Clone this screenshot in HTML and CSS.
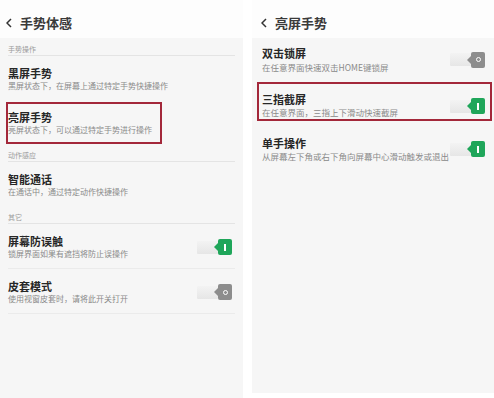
FILE: index.html
```html
<!DOCTYPE html>
<html lang="zh-CN">
<head>
<meta charset="utf-8">
<title>手势体感</title>
<link rel="stylesheet" href="styles.css">
</head>
<body>
<div class="screens">
  <div class="screen screen--left">
    <div class="header">
      <svg class="back" width="6" height="10" viewBox="0 0 6 10"><polyline points="5,1 1,5 5,9" fill="none" stroke="#333" stroke-width="1.5"/></svg>
      <span class="header-title">手势体感</span>
    </div>
    <div class="panel">
      <div class="section"><span>手势操作</span></div>
      <div class="item">
        <div class="text"><div class="title">黑屏手势</div><div class="sub">黑屏状态下，在屏幕上通过特定手势快捷操作</div></div>
      </div>
      <div class="item item--mark">
        <div class="text"><div class="title">亮屏手势</div><div class="sub">亮屏状态下，可以通过特定手势进行操作</div></div>
      </div>
      <div class="section"><span>动作感应</span></div>
      <div class="item">
        <div class="text"><div class="title">智能通话</div><div class="sub">在通话中，通过特定动作快捷操作</div></div>
      </div>
      <div class="section"><span>其它</span></div>
      <div class="item item--line">
        <div class="text"><div class="title">屏幕防误触</div><div class="sub">锁屏界面如果有遮挡将防止误操作</div></div>
        <span class="switch on"><span class="track"></span><span class="thumb"><i></i></span></span>
      </div>
      <div class="item item--line">
        <div class="text"><div class="title">皮套模式</div><div class="sub">使用视窗皮套时，请将此开关打开</div></div>
        <span class="switch off"><span class="track"></span><span class="thumb"><i></i></span></span>
      </div>
    </div>
  </div>
  <div class="screen screen--right">
    <div class="header">
      <svg class="back" width="6" height="10" viewBox="0 0 6 10"><polyline points="5,1 1,5 5,9" fill="none" stroke="#333" stroke-width="1.5"/></svg>
      <span class="header-title">亮屏手势</span>
    </div>
    <div class="panel">
      <div class="item">
        <div class="text"><div class="title">双击锁屏</div><div class="sub">在任意界面快速双击HOME键锁屏</div></div>
        <span class="switch off"><span class="track"></span><span class="thumb"><i></i></span></span>
      </div>
      <div class="item item--mark">
        <div class="text"><div class="title">三指截屏</div><div class="sub">在任意界面，三指上下滑动快速截屏</div></div>
        <span class="switch on"><span class="track"></span><span class="thumb"><i></i></span></span>
      </div>
      <div class="item item--last">
        <div class="text"><div class="title">单手操作</div><div class="sub">从屏幕左下角或右下角向屏幕中心滑动触发或退出</div></div>
        <span class="switch on"><span class="track"></span><span class="thumb"><i></i></span></span>
      </div>
    </div>
  </div>
</div>
</body>
</html>
```

FILE: styles.css
```css
html, body {
  margin: 0;
  padding: 0;
}
body {
  width: 494px;
  height: 398px;
  overflow: hidden;
  background: #ffffff;
  font-family: "Noto Sans CJK SC", "Noto Sans", sans-serif;
  color: #222;
}
.screens {
  display: flex;
  gap: 9px;
  height: 398px;
}
.screen {
  display: flex;
  flex-direction: column;
}
.screen--left {
  width: 243px;
}
.screen--right {
  width: 242px;
  padding-bottom: 5px;
  box-sizing: border-box;
}
.header {
  height: 38px;
  box-sizing: border-box;
  padding: 8px 0 0 6px;
  display: flex;
  align-items: center;
  gap: 8px;
  background: #fdfdfd;
}
.screen--right .header {
  padding-left: 9px;
  gap: 8px;
}
.back {
  display: block;
}
.header-title {
  font-size: 13px;
  font-weight: 600;
  color: #3a3a3a;
  line-height: 16px;
}
.panel {
  flex: 1;
  background: #f6f6f6;
  display: flex;
  flex-direction: column;
}
.section {
  height: 18px;
  box-sizing: border-box;
  margin: 0 8px;
  padding-top: 4px;
  border-bottom: 1px solid #e4e4e4;
  font-size: 7px;
  line-height: 14px;
  color: #9a9a9a;
}
.item {
  display: flex;
  align-items: center;
  justify-content: space-between;
  margin: 0 8px;
  padding: 10px 3px 8px 0;
}
.item--line {
  border-bottom: 1px solid #ebebeb;
}
.title {
  font-size: 11px;
  line-height: 14px;
  font-weight: 600;
  color: #262626;
}
.sub {
  font-size: 8px;
  line-height: 12px;
  color: #8a8a8a;
  white-space: nowrap;
}
.screen--left .item--mark {
  margin: 2px 0 0 6px;
  width: 156px;
  box-sizing: border-box;
  border: 2px solid #a3283a;
  padding: 6px 0 6px 0;
}
.screen--right .item {
  margin: 0;
  padding: 8px 9px 7px 10px;
}
.screen--right .sub {
  font-size: 8.5px;
  margin-top: 1px;
}
.screen--right .item--mark {
  margin: 2px 2px 0 5px;
  border: 2px solid #a3283a;
  padding: 8px 5px 1px 3px;
}
.screen--right .item--mark .sub {
  margin-top: 0;
}
.screen--right .item--mark .switch {
  margin-top: 2px;
}
.screen--right .item--last {
  padding-top: 15px;
  padding-bottom: 8px;
}
.screen--right .item--last .sub {
  margin-top: 0;
}
.switch {
  display: flex;
  align-items: center;
  width: 35px;
  height: 16px;
  flex-shrink: 0;
}
.track {
  width: 21px;
  height: 13px;
  background: linear-gradient(#f3f3f3, #e6e6e6);
  border-radius: 1px;
}
.thumb {
  position: relative;
  width: 14px;
  height: 16px;
  border-radius: 2px;
  display: flex;
  align-items: center;
  justify-content: center;
}
.thumb::before {
  content: "";
  position: absolute;
  left: -4px;
  top: 4px;
  border-top: 4px solid transparent;
  border-bottom: 4px solid transparent;
  border-right: 4px solid currentColor;
}
.on .thumb {
  background: #1fa65a;
  color: #1fa65a;
}
.on .thumb i {
  display: block;
  width: 2px;
  height: 7px;
  background: #fff;
}
.off .thumb {
  background: #8d8d8d;
  color: #8d8d8d;
}
.off .thumb i {
  display: block;
  width: 3px;
  height: 3px;
  border: 1.5px solid #fff;
  border-radius: 50%;
}
```
